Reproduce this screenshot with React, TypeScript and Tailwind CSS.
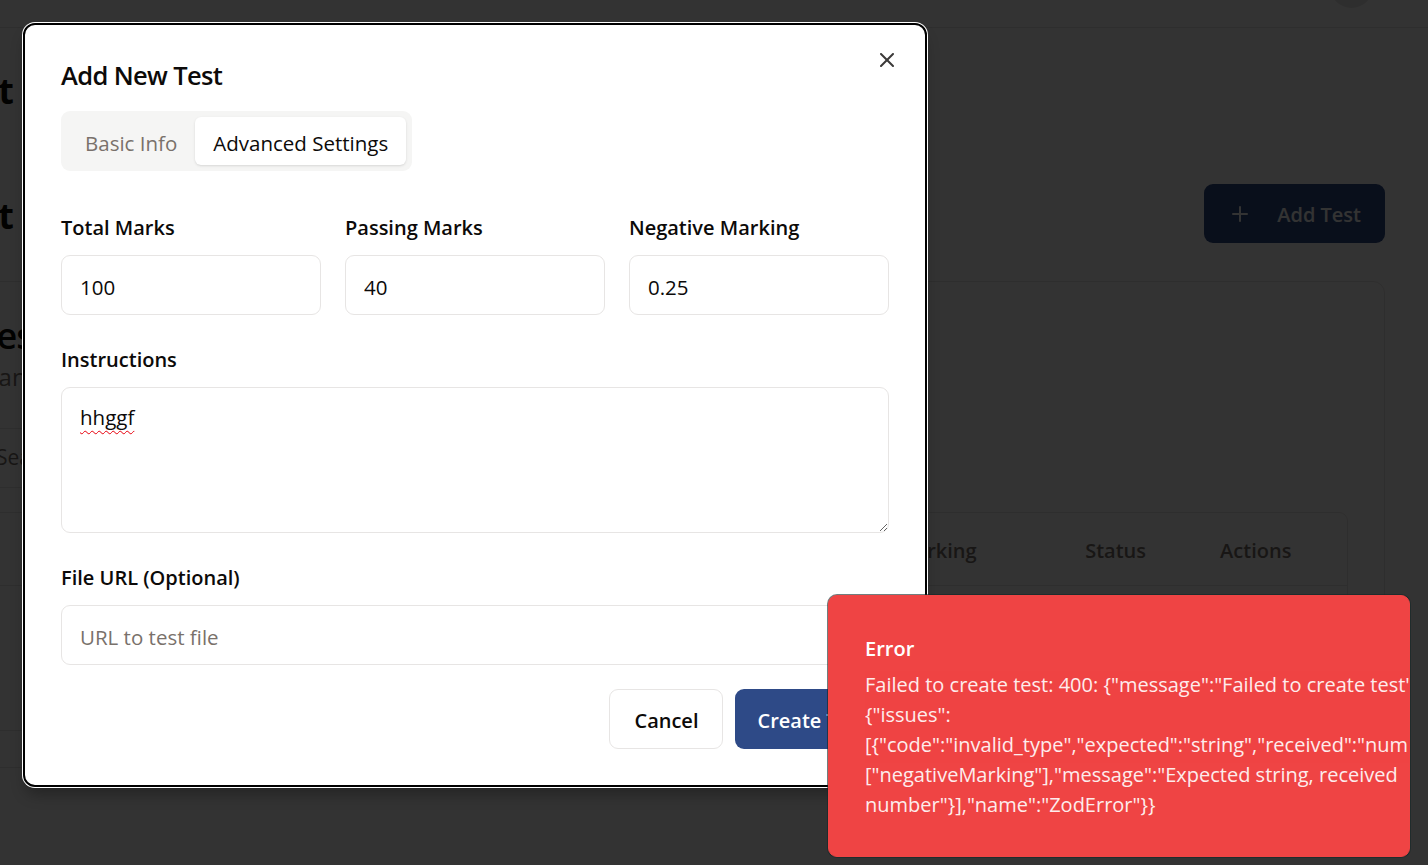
import { X, Plus } from "lucide-react";

const errorText =
  'Failed to create test: 400: {"message":"Failed to create test","errors":{"issues":[{"code":"invalid_type","expected":"string","received":"number","path":["negativeMarking"],"message":"Expected string, received number"}],"name":"ZodError"}}';

function Field({ label, value }: { label: string; value: string }) {
  return (
    <div className="flex flex-col gap-[12px]">
      <label className="text-[20px] font-semibold leading-[30px]">{label}</label>
      <input
        readOnly
        value={value}
        className="h-[60px] w-full rounded-[9px] border border-stone-200 bg-white px-[18px] pt-[3px] text-[20.5px] text-stone-950 outline-none"
      />
    </div>
  );
}

export default function App() {
  return (
    <div className="relative h-[865px] w-[1428px] overflow-hidden bg-white font-['Open_Sans',sans-serif] text-stone-950">
      {/* page behind the dialog */}
      <header className="flex h-[28px] items-end justify-end border-b border-stone-200 pr-[55px]">
        <div className="mb-[19px] h-[43px] w-[43px] shrink-0 rounded-full bg-stone-200" />
      </header>

      <main className="ml-[-60px] w-[1445px]">
        <div className="mt-[43px] flex w-[74px] justify-end">
          <h1 className="shrink-0 whitespace-nowrap text-[36px] font-bold leading-[40px]">
            Test Management
          </h1>
        </div>

        <div className="mt-[73px] flex h-[59px] items-center justify-between">
          <div className="flex w-[74px] justify-end pt-[4px]">
            <h2 className="shrink-0 whitespace-nowrap text-[36px] font-bold leading-[40px]">
              All Tests List
            </h2>
          </div>
          <button className="flex h-[59px] items-center gap-[25px] rounded-[9px] bg-[#2e4a87] px-[24px] pt-[3px] text-[20px] font-semibold text-white">
            <Plus size={24} strokeWidth={2} className="-mt-[3px]" />
            Add Test
          </button>
        </div>

        <div className="mt-[38px] rounded-[12px] border border-stone-200 p-[36px]">
          <h3 className="text-[36px] font-semibold leading-[36px] tracking-tight">Tests</h3>
          <p className="mt-[5px] text-[24px] leading-[36px] text-stone-500">Manage your tests</p>

          <div className="mt-[33px] flex h-[60px] w-[600px] items-center rounded-[9px] border border-stone-200 px-[18px] text-[21px] text-stone-500">
            Search tests...
          </div>

          <div className="mt-[24px] rounded-[9px] border border-stone-200">
            <div className="flex h-[73px] items-center border-b border-stone-200 pt-[3px] text-[20px] font-semibold text-stone-500">
              <div className="w-[808px] pl-[50px]">Title</div>
              <div className="w-[282px] pl-[21px]">Negative Marking</div>
              <div className="w-[136px] pl-[18px]">Status</div>
              <div className="w-[144px] pl-[17px]">Actions</div>
            </div>
            <div className="h-[144px]" />
          </div>
        </div>
      </main>

      {/* overlay */}
      <div className="absolute inset-0 bg-black/80" />

      {/* dialog */}
      <div className="absolute left-[23px] top-[23px] w-[904px] rounded-[12px] border-2 border-black bg-white p-[36px] shadow-[0_0_0_1px_#fff,0_10px_15px_-3px_rgba(0,0,0,0.3)]">
        <button className="absolute right-[26px] top-[23px] text-stone-950 opacity-80">
          <X size={24} strokeWidth={2} />
        </button>

        <h2 className="pt-[1px] text-[25.5px] font-semibold leading-[26px] tracking-tight">Add New Test</h2>

        <div className="mt-[23px] inline-flex h-[60px] items-center rounded-[9px] bg-stone-100 p-[6px]">
          <div className="flex h-[48px] items-center px-[18px] pt-[4px] text-[20.5px] font-medium text-stone-500">
            Basic Info
          </div>
          <div className="flex h-[48px] items-center rounded-[6px] bg-white px-[18px] pt-[4px] text-[20.5px] font-medium text-stone-950 shadow-sm">
            Advanced Settings
          </div>
        </div>

        <div className="mt-[42px] grid grid-cols-3 gap-[24px]">
          <Field label="Total Marks" value="100" />
          <Field label="Passing Marks" value="40" />
          <Field label="Negative Marking" value="0.25" />
        </div>

        <div className="mt-[30px] flex flex-col gap-[12px]">
          <label className="text-[20px] font-semibold leading-[30px]">Instructions</label>
          <div className="h-[146px] resize-y overflow-auto rounded-[9px] border border-stone-200 px-[18px] pt-[14px] text-[20.5px] leading-[30px]">
            <span className="underline decoration-red-600 decoration-wavy decoration-1 underline-offset-[5px]">
              hhggf
            </span>
          </div>
        </div>

        <div className="mt-[30px] flex flex-col gap-[12px]">
          <label className="text-[20px] font-semibold leading-[30px]">File URL (Optional)</label>
          <input
            readOnly
            placeholder="URL to test file"
            className="h-[60px] w-full rounded-[9px] border border-stone-200 px-[18px] pt-[3px] text-[20.5px] outline-none placeholder:text-stone-500"
          />
        </div>

        <div className="mt-[24px] flex justify-end gap-[12px]">
          <button className="h-[60px] rounded-[9px] border border-stone-200 bg-white px-[24px] pt-[3px] text-[20px] font-semibold">
            Cancel
          </button>
          <button className="h-[60px] rounded-[9px] bg-[#2e4a87] px-[22px] pt-[3px] text-[20px] font-semibold text-white">
            Create Test
          </button>
        </div>
      </div>

      {/* toast */}
      <div className="absolute left-[828px] top-[595px] flex w-[582px] items-center justify-between overflow-hidden rounded-[9px] border border-[#ef4444] bg-[#ef4444] p-[36px] pr-[48px] text-white shadow-[0_0_0_1px_rgba(20,40,40,0.6)]">
        <div className="grid gap-[6px] pt-[2px]">
          <div className="text-[20px] font-semibold leading-[30px]">Error</div>
          <div className="text-[20px] leading-[30px] opacity-90">{errorText}</div>
        </div>
      </div>
    </div>
  );
}
